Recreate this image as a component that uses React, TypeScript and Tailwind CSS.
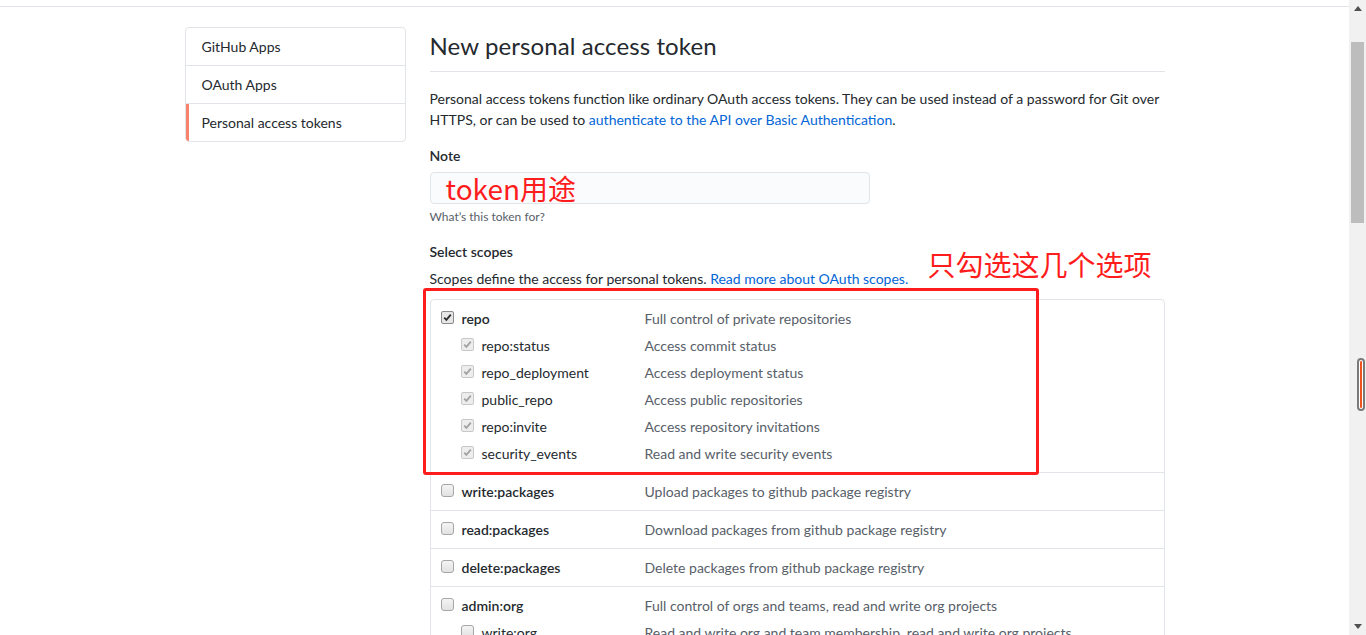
import React from "react";

type Scope = { name: string; desc: string; checked?: boolean; subs?: { name: string; desc: string; checked?: boolean }[] };

const scopes: Scope[] = [
  {
    name: "repo",
    desc: "Full control of private repositories",
    checked: true,
    subs: [
      { name: "repo:status", desc: "Access commit status", checked: true },
      { name: "repo_deployment", desc: "Access deployment status", checked: true },
      { name: "public_repo", desc: "Access public repositories", checked: true },
      { name: "repo:invite", desc: "Access repository invitations", checked: true },
      { name: "security_events", desc: "Read and write security events", checked: true },
    ],
  },
  { name: "write:packages", desc: "Upload packages to github package registry" },
  { name: "read:packages", desc: "Download packages from github package registry" },
  { name: "delete:packages", desc: "Delete packages from github package registry" },
  {
    name: "admin:org",
    desc: "Full control of orgs and teams, read and write org projects",
    subs: [
      { name: "write:org", desc: "Read and write org and team membership, read and write org projects" },
      { name: "read:org", desc: "Read org and team membership, read org projects" },
    ],
  },
];

function Checkbox({ checked, disabled }: { checked?: boolean; disabled?: boolean }) {
  if (checked && !disabled) {
    return (
      <span className="flex h-[13px] w-[13px] flex-none items-center justify-center rounded-[2px] border border-[#8a8a8a] bg-[#e6e6e6]">
        <svg width="9" height="9" viewBox="0 0 9 9">
          <path d="M1.2 4.6 L3.4 6.9 L7.8 1.6" fill="none" stroke="#2e2e2e" strokeWidth="1.8" />
        </svg>
      </span>
    );
  }
  if (checked && disabled) {
    return (
      <span className="flex h-[13px] w-[13px] flex-none items-center justify-center rounded-[2px] border border-[#c8c8c8] bg-[#ededed]">
        <svg width="9" height="9" viewBox="0 0 9 9">
          <path d="M1.2 4.6 L3.4 6.9 L7.8 1.6" fill="none" stroke="#a3a3a3" strokeWidth="1.8" />
        </svg>
      </span>
    );
  }
  return (
    <span className="block h-[13px] w-[13px] flex-none rounded-[3px] border border-[#a6a6a6] bg-gradient-to-b from-[#f4f4f4] to-[#e2e2e2]" />
  );
}

export default function App() {
  return (
    <div className="flex h-[635px] w-[1366px] overflow-hidden bg-white font-['Lato','Noto_Sans_CJK_SC',sans-serif] text-[14px] text-[#24292e]">
      <div className="flex h-full w-[1349px] flex-col">
        <div className="h-[7px] w-full flex-none border-b border-[#e1e4e8]" />
        <div className="mx-auto flex w-[980px] pt-[20px]">
          {/* sidebar */}
          <div className="w-[221px] flex-none">
            <nav className="overflow-hidden rounded-[4px] border border-[#e1e4e8]">
              <div className="flex h-[38px] items-center border-b border-[#e1e4e8] px-[16px]">GitHub Apps</div>
              <div className="flex h-[38px] items-center border-b border-[#e1e4e8] px-[16px]">OAuth Apps</div>
              <div className="flex h-[37px] items-center border-l-[3px] border-[#f9826c] pl-[13px]">Personal access tokens</div>
            </nav>
          </div>
          {/* main */}
          <div className="ml-auto w-[735px]">
            <div className="border-b border-[#e1e4e8] pb-[7px] pt-[1px]">
              <h1 className="text-[24px] font-normal leading-[36px] tracking-[0.1px]">New personal access token</h1>
            </div>
            <p className="mt-[16px] leading-[21px] whitespace-nowrap">
              Personal access tokens function like ordinary OAuth access tokens. They can be used instead of a password for Git over
              <br />
              HTTPS, or can be used to <span className="text-[#0366d6]">authenticate to the API over Basic Authentication</span>.
            </p>
            <div className="mt-[15px] font-semibold leading-[21px]">Note</div>
            <div className="mt-[6px] flex h-[32px] w-[440px] items-center rounded-[4px] border border-[#e1e4e8] bg-[#fafbfc] pl-[15px]">
              <span className="font-['Noto_Sans_CJK_SC','Noto_Sans',sans-serif] text-[28px] leading-[32px] text-[#ff1c1c]">token用途</span>
            </div>
            <div className="mt-[4px] text-[12px] leading-[18px] text-[#586069]">What’s this token for?</div>
            <div className="mt-[15px] font-semibold leading-[21px]">Select scopes</div>
            <div className="relative">
              <p className="mt-[6px] leading-[21px]">
                Scopes define the access for personal tokens. <span className="text-[#0366d6]">Read more about OAuth scopes.</span>
              </p>
              <div className="pointer-events-none absolute left-[498px] top-[-24px] whitespace-nowrap font-['Noto_Sans_CJK_SC',sans-serif] text-[28px] leading-[40px] text-[#ff1c1c]">
                只勾选这几个选项
              </div>
              <div className="relative mt-[10px] rounded-[4px] border border-[#e1e4e8]">
                {scopes.map((s) => (
                  <div key={s.name} className="border-b border-[#e1e4e8] pb-[8px] pl-[10px] pt-[9px]">
                    <div className="flex h-[20px] items-center leading-[20px]">
                      <div className="flex w-[204px] flex-none items-center">
                        <span className="mb-[3px]">
                          <Checkbox checked={s.checked} />
                        </span>
                        <span className="ml-[8px] font-semibold">{s.name}</span>
                      </div>
                      <span className="text-[#586069]">{s.desc}</span>
                    </div>
                    {s.subs?.map((sub) => (
                      <div key={sub.name} className="mt-[7px] flex h-[20px] items-center leading-[20px]">
                        <div className="flex w-[204px] flex-none items-center pl-[20px]">
                          <span className="mb-[3px]">
                            <Checkbox checked={sub.checked} disabled={sub.checked} />
                          </span>
                          <span className="ml-[8px]">{sub.name}</span>
                        </div>
                        <span className="text-[#586069]">{sub.desc}</span>
                      </div>
                    ))}
                  </div>
                ))}
                <div className="pointer-events-none absolute left-[-8px] top-[-12px] h-[187px] w-[616px] rounded-[3px] border-[3px] border-[#ff1c1c]" />
              </div>
            </div>
          </div>
        </div>
      </div>
      {/* scrollbar */}
      <div className="relative flex h-full w-[17px] flex-none flex-col items-center bg-[#f1f1f1]">
        <div className="flex h-[17px] w-full items-center justify-center">
          <svg width="8" height="5" viewBox="0 0 8 5">
            <path d="M0 5 L4 0 L8 5 Z" fill="#505050" />
          </svg>
        </div>
        <div className="mt-[25px] h-[181px] w-[13px] bg-[#bdbdbd]" />
        <div className="flex-1" />
        <div className="flex h-[17px] w-full items-center justify-center">
          <svg width="8" height="5" viewBox="0 0 8 5">
            <path d="M0 0 L4 5 L8 0 Z" fill="#505050" />
          </svg>
        </div>
        <div className="absolute left-[8px] top-[358px] h-[53px] w-[8px] rounded-full border-[2px] border-[#7a7a7a] bg-white p-[1px]">
          <div className="h-full w-full rounded-full bg-[#f0541e]" />
        </div>
      </div>
    </div>
  );
}
